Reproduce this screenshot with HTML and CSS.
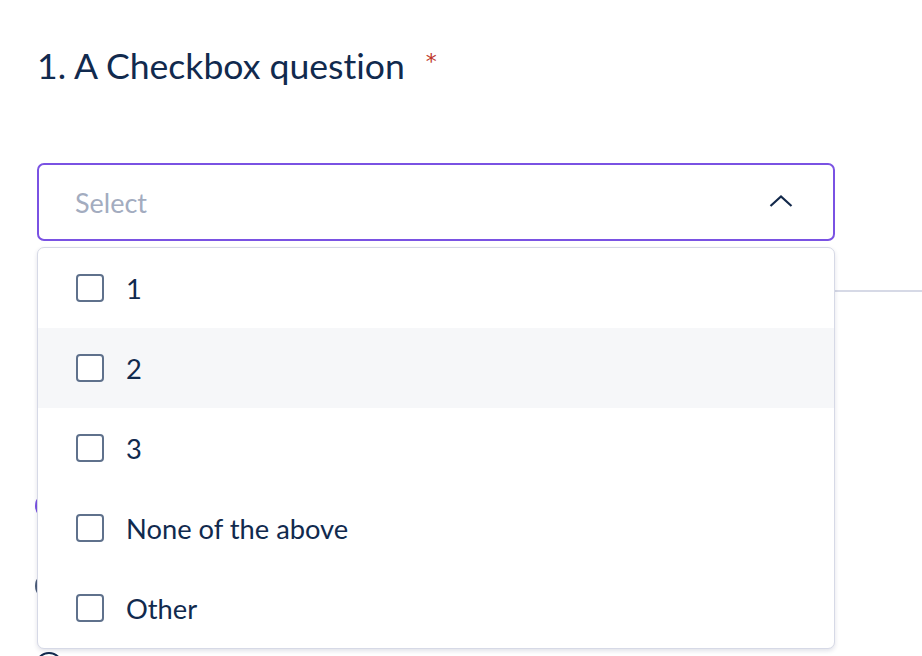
FILE: index.html
```html
<!DOCTYPE html>
<html>
<head>
<meta charset="utf-8">
<link rel="stylesheet" href="styles.css">
</head>
<body>
<div class="page">
  <h1 class="title"><span>1. A Checkbox question</span><span class="req">*</span></h1>
  <div class="field">
    <div class="select">
      <span class="placeholder">Select</span>
      <svg class="chevron" width="24" height="14" viewBox="0 0 24 14"><path d="M1.5 12 L12 2.5 L22.5 12" fill="none" stroke="#13294b" stroke-width="2.2"/></svg>
    </div>
    <div class="under">
      <div class="divider"></div>
      <div class="radios">
        <div class="radio-row"><span class="radio purple"></span><span class="rtext">Yes</span></div>
        <div class="radio-row"><span class="radio"></span><span class="rtext">No</span></div>
        <div class="radio-row"><span class="radio dark"></span></div>
      </div>
    </div>
    <ul class="menu">
      <li class="option"><span class="box"></span><span class="label">1</span></li>
      <li class="option hover"><span class="box"></span><span class="label">2</span></li>
      <li class="option"><span class="box"></span><span class="label">3</span></li>
      <li class="option"><span class="box"></span><span class="label">None of the above</span></li>
      <li class="option"><span class="box"></span><span class="label">Other</span></li>
    </ul>
  </div>
</div>
</body>
</html>
```

FILE: styles.css
```css
html, body {
  margin: 0;
  padding: 0;
  background: #ffffff;
  overflow: hidden;
}
body {
  font-family: Lato, "Open Sans", sans-serif;
  font-variant-ligatures: none;
  color: #112a4e;
  width: 922px;
  height: 656px;
}
.page {
  padding: 46px 0 0 37px;
}
.title {
  margin: 0;
  font-size: 35.6px;
  line-height: 40px;
  font-weight: 400;
  color: #112a4e;
  display: flex;
  align-items: flex-start;
}
.req {
  color: #c0392b;
  font-family: "DejaVu Sans", sans-serif;
  font-size: 22px;
  line-height: 22px;
  margin-left: 21px;
  margin-top: 5px;
}
.field {
  position: relative;
  margin-top: 77px;
}
.select {
  box-sizing: border-box;
  width: 798px;
  height: 78px;
  border: 2px solid #7a52e3;
  border-radius: 7px;
  display: flex;
  align-items: center;
  justify-content: space-between;
  padding: 0 40px 0 36px;
}
.placeholder {
  font-size: 27px;
  color: #a3acbf;
}
.chevron {
  display: block;
  margin-top: -2px;
}
.under {
  padding-top: 49px;
}
.divider {
  height: 2px;
  background: #d6d9e6;
  margin-right: -40px;
}
.radios {
  margin-top: 174px;
  margin-left: -2px;
}
.radio-row {
  height: 80px;
  display: flex;
  align-items: center;
  gap: 30px;
}
.radio {
  box-sizing: border-box;
  width: 28px;
  height: 28px;
  border-radius: 50%;
  border: 2px solid #4b5d78;
}
.radio.purple {
  border-color: #7a52e3;
}
.radio.dark {
  border-color: #112a4e;
}
.rtext {
  font-size: 24px;
}
.menu {
  position: absolute;
  top: 84px;
  left: 0;
  width: 798px;
  box-sizing: border-box;
  margin: 0;
  padding: 0;
  list-style: none;
  background: #ffffff;
  border: 1px solid #d6d9e6;
  border-radius: 7px;
  box-shadow: 0 2px 4px rgba(40, 50, 100, 0.14);
  overflow: hidden;
}
.option {
  height: 80px;
  display: flex;
  align-items: center;
  padding-left: 38px;
  gap: 22px;
}
.option.hover {
  background: #f6f7f9;
}
.box {
  box-sizing: border-box;
  width: 28px;
  height: 28px;
  border: 2px solid #5f718c;
  border-radius: 4px;
  background: #ffffff;
  flex: none;
}
.label {
  font-size: 27.3px;
  color: #112a4e;
}
```
